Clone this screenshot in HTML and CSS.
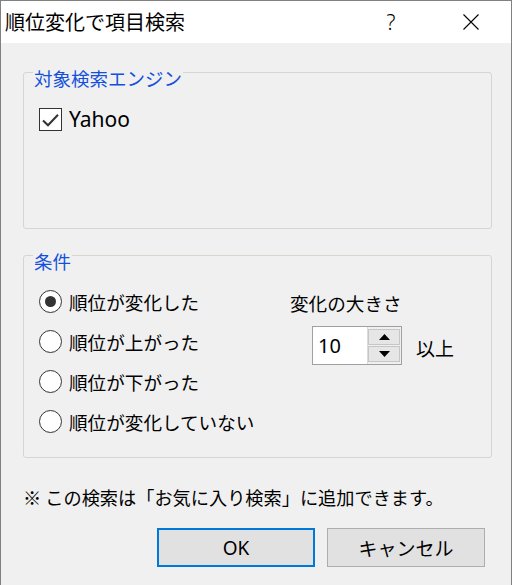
FILE: index.html
```html
<!DOCTYPE html>
<html lang="ja">
<head>
<meta charset="utf-8">
<title>順位変化で項目検索</title>
<link rel="stylesheet" href="styles.css">
</head>
<body>
<div class="window">
  <div class="titlebar">
    <span class="title">順位変化で項目検索</span>
    <span class="cap help">?</span>
    <span class="cap close"><svg width="16" height="16" viewBox="0 0 16 16"><path d="M0.5 0.5 L15.5 15.5 M15.5 0.5 L0.5 15.5" stroke="#000" stroke-width="1.1" fill="none"/></svg></span>
  </div>
  <div class="client">
    <div class="group g1">
      <div class="legend">対象検索エンジン</div>
      <label class="check"><span class="box"><svg width="21" height="21" viewBox="0 0 21 21"><path d="M3 11.5 L8 16.3 L18 5.8" stroke="#333" stroke-width="2" fill="none"/></svg></span><span class="latin big">Yahoo</span></label>
    </div>
    <div class="group g2">
      <div class="legend">条件</div>
      <div class="cond">
        <div class="radios">
          <label class="radio"><span class="circle on"></span>順位が変化した</label>
          <label class="radio"><span class="circle"></span>順位が上がった</label>
          <label class="radio"><span class="circle"></span>順位が下がった</label>
          <label class="radio"><span class="circle"></span>順位が変化していない</label>
        </div>
        <div class="size">
          <div class="size-label">変化の大きさ</div>
          <div class="spin-row">
            <div class="spin">
              <span class="spin-val latin">10</span>
              <span class="spin-btns">
                <span class="sbtn"><svg width="11" height="6" viewBox="0 0 11 6"><path d="M5.5 0 L11 6 L0 6 Z" fill="#000"/></svg></span>
                <span class="sbtn"><svg width="11" height="6" viewBox="0 0 11 6"><path d="M0 0 L11 0 L5.5 6 Z" fill="#000"/></svg></span>
              </span>
            </div>
            <span class="unit">以上</span>
          </div>
        </div>
      </div>
    </div>
    <p class="note">※ この検索は「お気に入り検索」に追加できます。</p>
    <div class="buttons">
      <button class="btn default latin">OK</button>
      <button class="btn">キャンセル</button>
    </div>
  </div>
</div>
</body>
</html>
```
FILE: styles.css
```css
* { box-sizing: border-box; }
html, body { margin: 0; padding: 0; background: #f0f0f0; }
body {
  font-family: "Noto Sans", "Noto Sans CJK JP", sans-serif;
  font-size: 19px;
  color: #000;
}
.window {
  width: 512px;
  height: 585px;
  border-top: 1px solid #808080;
  border-left: 1px solid #808080;
  border-right: 1px solid #808080;
  display: flex;
  flex-direction: column;
}
.titlebar {
  height: 42px;
  background: #fff;
  display: flex;
  align-items: center;
  padding-left: 4px;
  padding-right: 20px;
}
.title {
  flex: 1;
  font-family: "Noto Sans CJK JP", sans-serif;
  font-size: 20px;
  line-height: 42px;
}
.cap {
  width: 40px;
  display: flex;
  justify-content: center;
  align-items: center;
}
.help {
  font-size: 21px;
  line-height: 42px;
  font-weight: 300;
  margin-right: 40px;
}
.close svg { display: block; }
.client {
  flex: 1;
  background: #f0f0f0;
  padding: 0 19px 0 22px;
  display: flex;
  flex-direction: column;
}
.group {
  border: 1px solid #d6d6cf;
  border-radius: 3px;
  padding-left: 15px;
}
.g1 { margin-top: 29px; height: 157px; }
.g2 { margin-top: 26px; height: 203px; }
.legend {
  width: max-content;
  margin: -5px 0 0 -6px;
  padding: 0 1px;
  background: #f0f0f0;
  color: #1450dc;
  font-family: "Noto Sans CJK JP", sans-serif;
  font-size: 18.5px;
  line-height: 20px;
}
.check {
  display: flex;
  align-items: center;
  gap: 7px;
  margin-top: 19px;
  height: 24px;
}
.box {
  width: 23px;
  height: 23px;
  border: 1px solid #333;
  background: #fff;
  display: flex;
  align-items: center;
  justify-content: center;
}
.box svg { display: block; }
.big { font-size: 21px; line-height: 24px; }
.cond {
  display: flex;
  margin-top: 10px;
}
.radios {
  width: 251px;
  display: flex;
  flex-direction: column;
}
.radio {
  height: 40px;
  display: flex;
  align-items: center;
  gap: 7px;
  font-family: "Noto Sans CJK JP", sans-serif;
  font-size: 18.6px;
}
.circle {
  width: 23px;
  height: 23px;
  border: 1.5px solid #333;
  border-radius: 50%;
  background: #fff;
  display: flex;
  align-items: center;
  justify-content: center;
}
.circle.on::after {
  content: "";
  width: 11px;
  height: 11px;
  border-radius: 50%;
  background: #333;
}
.size {
  display: flex;
  flex-direction: column;
}
.size-label {
  height: 40px;
  line-height: 40px;
  padding-top: 2px;
  font-family: "Noto Sans CJK JP", sans-serif;
  font-size: 18.6px;
}
.spin-row {
  display: flex;
  align-items: center;
  margin-top: 5px;
  margin-left: 22px;
  gap: 14px;
}
.spin {
  width: 90px;
  height: 39px;
  border: 1px solid #a0a0a0;
  background: #fff;
  display: flex;
}
.spin-val {
  flex: 1;
  padding-left: 5px;
  line-height: 37px;
  font-size: 20px;
}
.spin-btns {
  width: 34px;
  display: flex;
  flex-direction: column;
  gap: 1px;
  padding: 2px 1px 2px 0;
  background: #f0f0f0;
  border-left: 1px solid #dadada;
}
.sbtn {
  flex: 1;
  background: #e6e6e6;
  border: 1px solid #c6c6c6;
  display: flex;
  align-items: center;
  justify-content: center;
}
.sbtn svg { display: block; }
.unit {
  font-family: "Noto Sans CJK JP", sans-serif;
  font-size: 19px;
  padding-top: 4px;
}
.note {
  margin: 27px 0 0 0;
  line-height: 24px;
  font-family: "Noto Sans CJK JP", sans-serif;
  font-size: 18.2px;
}
.buttons {
  display: flex;
  justify-content: flex-end;
  gap: 12px;
  margin-top: 19px;
  padding-right: 7px;
}
.btn {
  width: 158px;
  height: 39px;
  background: #e1e1e1;
  border: 1px solid #adadad;
  font-family: "Noto Sans CJK JP", sans-serif;
  font-size: 19px;
  color: #000;
  padding: 0;
}
.btn.latin { font-family: "Noto Sans", sans-serif; }
.btn.default { border: 2px solid #0078d7; }
```
